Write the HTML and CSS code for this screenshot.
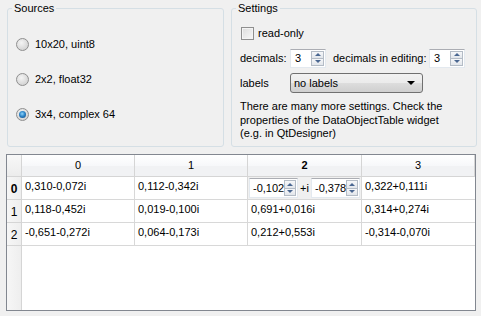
FILE: index.html
```html
<!DOCTYPE html>
<html lang="en">
<head>
  <meta charset="UTF-8" />
  <title>DataObjectTable demo</title>
  <link rel="stylesheet" href="styles.css">
</head>
<body>

<div class="window">
  <div class="top">
    <!-- Sources group -->
    <fieldset class="group sources">
      <legend>Sources</legend>
      <label class="radio"><span class="dot"></span>10x20, uint8</label>
      <label class="radio"><span class="dot"></span>2x2, float32</label>
      <label class="radio"><span class="dot checked"></span>3x4, complex 64</label>
    </fieldset>

    <!-- Settings group -->
    <fieldset class="group settings">
      <legend>Settings</legend>
      <label class="check"><span class="box"></span>read-only</label>
      <div class="row">
        <span class="lbl">decimals:</span>
        <div class="spin small">
          <span class="val">3</span>
          <span class="arrows"><span class="btn up"></span><span class="btn down"></span></span>
        </div>
        <span class="lbl2">decimals in editing:</span>
        <div class="spin small">
          <span class="val">3</span>
          <span class="arrows"><span class="btn up"></span><span class="btn down"></span></span>
        </div>
      </div>
      <div class="row combo-row">
        <span class="lbl">labels</span>
        <div class="combo">no labels<span class="caret"></span></div>
      </div>
      <p class="note">There are many more settings. Check the<br>properties of the DataObjectTable widget<br>(e.g. in QtDesigner)</p>
    </fieldset>
  </div>

  <!-- Table -->
  <div class="table">
    <div class="hdr corner"></div>
    <div class="hdr">0</div>
    <div class="hdr">1</div>
    <div class="hdr current">2</div>
    <div class="hdr">3</div>

    <div class="vhdr current">0</div>
    <div class="cell">0,310-0,072i</div>
    <div class="cell">0,112-0,342i</div>
    <div class="cell editor">
      <div class="spin wide">
        <span class="val">-0,102</span>
        <span class="arrows"><span class="btn up"></span><span class="btn down"></span></span>
      </div>
      <span class="plus">+i</span>
      <div class="spin wide">
        <span class="val">-0,378</span>
        <span class="arrows"><span class="btn up"></span><span class="btn down"></span></span>
      </div>
    </div>
    <div class="cell">0,322+0,111i</div>

    <div class="vhdr">1</div>
    <div class="cell">0,118-0,452i</div>
    <div class="cell">0,019-0,100i</div>
    <div class="cell">0,691+0,016i</div>
    <div class="cell">0,314+0,274i</div>

    <div class="vhdr">2</div>
    <div class="cell">-0,651-0,272i</div>
    <div class="cell">0,064-0,173i</div>
    <div class="cell">0,212+0,553i</div>
    <div class="cell">-0,314-0,070i</div>

    <div class="vhdr filler"></div>
    <div class="empty"></div>
  </div>
</div>

</body>
</html>
```

FILE: styles.css
```css
* {
  margin: 0;
  padding: 0;
  box-sizing: border-box;
  font-family: 'Liberation Sans', Arial, sans-serif;
}

body {
  background: #f0f0f0;
  font-size: 11px;
  line-height: 13px;
  color: #000;
}

.window {
  width: 481px;
  height: 316px;
  overflow: hidden;
}

.top {
  display: flex;
  gap: 7px;
  height: 147px;
  padding: 2px 0 0 7px;
}

.group {
  border: 1px solid #d5dfe5;
  border-radius: 3px;
  padding: 0 8px;
}

.group legend {
  line-height: 13px;
  padding: 0 2px;
  margin-left: -4px;
}

.sources {
  width: 217px;
  display: flex;
  flex-direction: column;
  gap: 22px;
  padding-top: 23px;
}

.settings {
  width: 246px;
  padding-top: 12px;
}

/* radio buttons */
.radio {
  display: flex;
  align-items: center;
  gap: 6px;
  height: 13px;
}

.dot {
  width: 13px;
  height: 13px;
  border-radius: 50%;
  border: 1px solid #8f8f8f;
  background: radial-gradient(circle at 40% 35%, #f4f4f4, #d6d6d6 70%, #c8c8c8);
  position: relative;
}

.dot.checked::after {
  content: "";
  position: absolute;
  left: 2px;
  top: 2px;
  width: 7px;
  height: 7px;
  border-radius: 50%;
  background: radial-gradient(circle at 45% 40%, #8fd4fb, #2d86c9 45%, #0b3f78);
}

/* checkbox */
.check {
  display: flex;
  align-items: center;
  gap: 4px;
  height: 13px;
  margin-left: 1px;
}

.box {
  width: 13px;
  height: 13px;
  border: 1px solid #8f8f8f;
  background: linear-gradient(135deg, #dcdcdc, #f8f8f8);
  box-shadow: inset 0 0 0 1px #f4f4f4;
}

.row {
  display: flex;
  align-items: center;
  height: 20px;
  margin-top: 8px;
}

.combo-row {
  margin-top: 5px;
}

.lbl {
  width: 50px;
}

.lbl2 {
  width: 96px;
  margin-left: 7px;
}

/* spin boxes */
.spin {
  display: flex;
  align-items: center;
  height: 20px;
  background: #fff;
  border: 1px solid #e3e9ef;
  border-top-color: #abadb3;
  padding: 1px;
}

.spin.small {
  width: 36px;
  height: 19px;
}

.spin.wide {
  width: 49px;
}

.spin .val {
  flex: 1;
  padding-left: 3px;
}

.spin.wide .val {
  padding-left: 2px;
}

.arrows {
  display: flex;
  flex-direction: column;
  width: 13px;
  height: 100%;
}

.btn {
  flex: 1;
  border: 1px solid #b4bcc6;
  background: linear-gradient(#f6f7f9, #e2e6eb);
  display: flex;
  align-items: center;
  justify-content: center;
}

.btn.up {
  border-bottom: none;
}

.btn::after {
  content: "";
  border-left: 3px solid transparent;
  border-right: 3px solid transparent;
}

.btn.up::after {
  border-bottom: 3px solid #4a6791;
}

.btn.down::after {
  border-top: 3px solid #4a6791;
}

/* combo box */
.combo {
  width: 133px;
  height: 20px;
  border: 1px solid #707070;
  border-radius: 3px;
  background: linear-gradient(#f2f2f2, #ebebeb 50%, #dddddd 51%, #cfcfcf);
  display: flex;
  align-items: center;
  padding-left: 3px;
  position: relative;
}

.caret {
  position: absolute;
  right: 7px;
  top: 7px;
  border-left: 4px solid transparent;
  border-right: 4px solid transparent;
  border-top: 4px solid #000;
}

.note {
  margin-top: 7px;
  line-height: 13.5px;
}

/* table */
.table {
  margin: 7px 0 0 6px;
  width: 470px;
  height: 157px;
  border: 1px solid #828790;
  background: #fff;
  display: grid;
  grid-template-columns: 15px repeat(4, 1fr);
  grid-template-rows: 22px 23px 23px 23px 1fr;
}

.hdr {
  background: linear-gradient(#ffffff, #f7f8fa 50%, #f1f2f4 51%, #f1f2f4);
  border-right: 1px solid #d5d5d5;
  border-bottom: 1px solid #d5d5d5;
  display: flex;
  align-items: center;
  justify-content: center;
}

.hdr:last-child {
  border-right: none;
}

.corner {
  background: linear-gradient(#f8f8f8, #ececec);
}

.current {
  font-weight: bold;
}

.vhdr {
  background: linear-gradient(90deg, #f6f6f6, #eeeeee);
  border-right: 1px solid #d5d5d5;
  border-bottom: 1px solid #d5d5d5;
  display: flex;
  align-items: center;
  justify-content: center;
  padding-top: 2px;
  font-size: 12px;
}

.vhdr.filler {
  border-bottom: none;
}

.cell {
  border-right: 1px solid #d8d8d8;
  border-bottom: 1px solid #d8d8d8;
  padding: 3px 3px 0;
  white-space: nowrap;
}

.cell:nth-child(5n) {
  border-right: none;
}

.cell.editor {
  background: #f0f0f0;
  display: flex;
  align-items: center;
  padding: 0 1px;
}

.plus {
  padding: 0 1px 0 2px;
  width: 13px;
}

.empty {
  grid-column: 2 / 6;
}
```
